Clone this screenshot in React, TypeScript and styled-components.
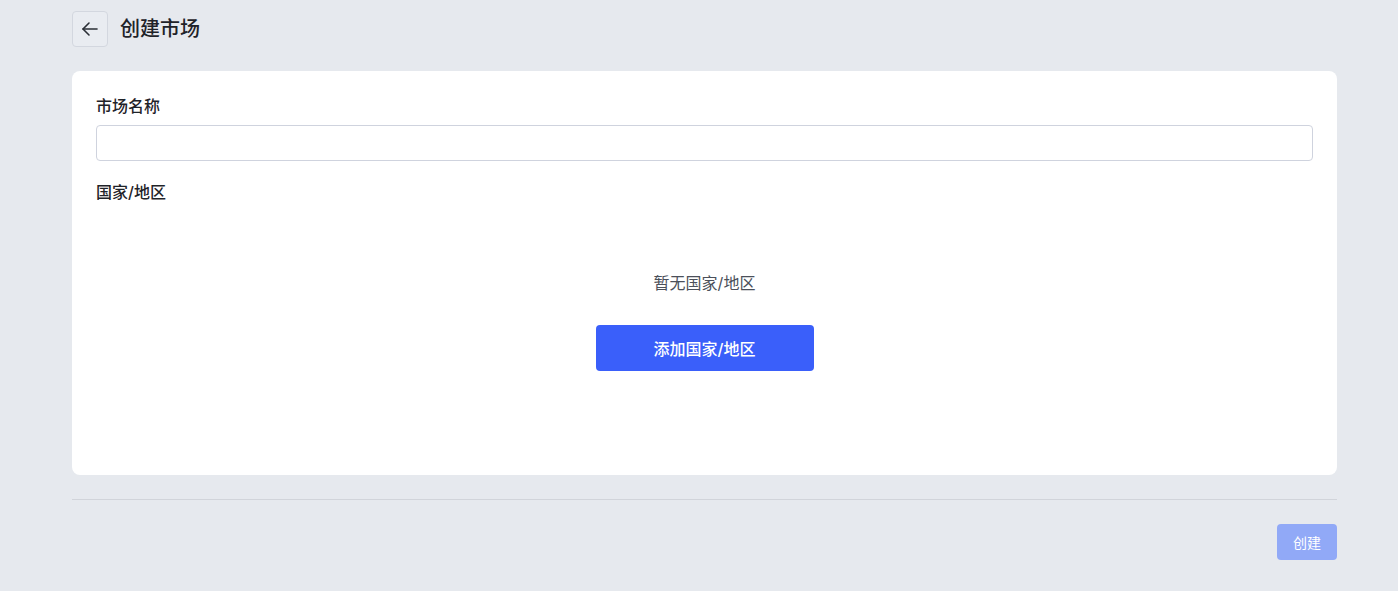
import styled, { createGlobalStyle } from 'styled-components';

const GlobalStyle = createGlobalStyle`
    html, body {
        margin: 0;
        padding: 0;
        background: #e6e9ee;
    }
    body {
        font-family: Inter, "Noto Sans", "Noto Sans CJK SC", sans-serif;
        color: #1f2329;
    }
`;

const Page = styled.div`
    padding: 11px 61px 31px 72px;
    box-sizing: border-box;
    min-height: 591px;
`;

const Header = styled.div`
    display: flex;
    align-items: center;
    gap: 12px;
    height: 36px;
    margin-bottom: 24px;
`;

const BackButton = styled.button`
    width: 36px;
    height: 36px;
    box-sizing: border-box;
    border: 1px solid #d3d7df;
    border-radius: 4px;
    background: #e9ecf1;
    display: flex;
    align-items: center;
    justify-content: center;
    padding: 0;
    cursor: pointer;
    color: #2b2f36;
`;

const Title = styled.h1`
    margin: 0;
    font-size: 20px;
    font-weight: 500;
    line-height: 28px;
    color: #1f2329;
`;

const Card = styled.div`
    background: #ffffff;
    border-radius: 8px;
    padding: 24px;
`;

const Label = styled.div<{ gap?: number }>`
    font-size: 16px;
    font-weight: 500;
    line-height: 22px;
    margin-top: ${({ gap }) => gap ?? 0}px;
    margin-bottom: 8px;
    color: #1f2329;
`;

const Input = styled.input`
    display: block;
    width: 100%;
    height: 36px;
    box-sizing: border-box;
    border: 1px solid #cfd3de;
    border-radius: 4px;
    padding: 0 12px;
    font-size: 14px;
    font-family: inherit;
    outline: none;
`;

const Empty = styled.div`
    display: flex;
    flex-direction: column;
    align-items: center;
    padding: 61px 0 80px;
`;

const EmptyText = styled.div`
    font-size: 16px;
    line-height: 22px;
    color: #4b505a;
    margin-bottom: 31px;
`;

const PrimaryButton = styled.button<{ disabled?: boolean }>`
    border: none;
    border-radius: 4px;
    color: #ffffff;
    font-family: inherit;
    cursor: pointer;
    background: #3a5ffa;
    &:disabled {
        background: #91a9f7;
        cursor: default;
    }
`;

const AddButton = styled(PrimaryButton)`
    width: 218px;
    height: 46px;
    font-size: 16px;
    font-weight: 500;
`;

const Divider = styled.hr`
    border: none;
    border-top: 1px solid #d1d4da;
    margin: 24px 0;
`;

const Footer = styled.div`
    display: flex;
    justify-content: flex-end;
`;

const SubmitButton = styled(PrimaryButton)`
    width: 60px;
    height: 36px;
    font-size: 14px;
`;

const ArrowLeft = () => (
    <svg width="18" height="18" viewBox="0 0 18 18" fill="none" stroke="currentColor" strokeWidth="1.6" strokeLinecap="round" strokeLinejoin="round">
        <path d="M16 9H2" />
        <path d="M8 3L2 9l6 6" />
    </svg>
);

const App = () => {
    return <>
        <GlobalStyle />
        <Page>
            <Header>
                <BackButton aria-label="返回"><ArrowLeft /></BackButton>
                <Title>创建市场</Title>
            </Header>
            <Card>
                <Label>市场名称</Label>
                <Input type="text" />
                <Label gap={20}>国家/地区</Label>
                <Empty>
                    <EmptyText>暂无国家/地区</EmptyText>
                    <AddButton>添加国家/地区</AddButton>
                </Empty>
            </Card>
            <Divider />
            <Footer>
                <SubmitButton disabled>创建</SubmitButton>
            </Footer>
        </Page>
    </>;
};

export default App;
